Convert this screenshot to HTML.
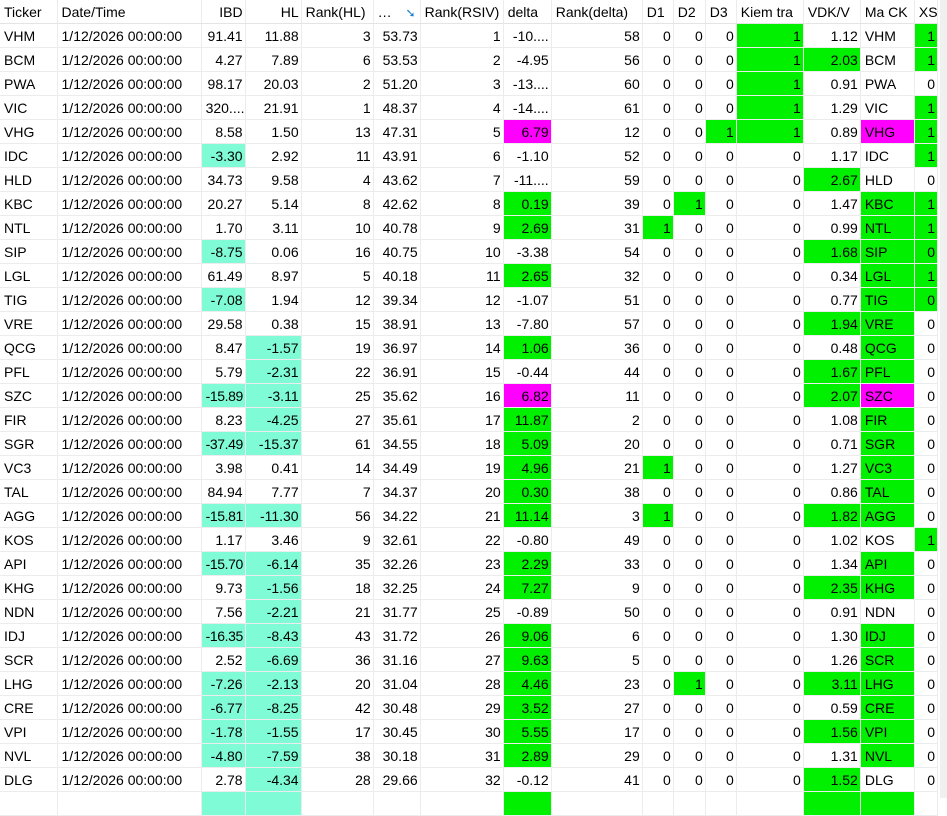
<!DOCTYPE html>
<html><head><meta charset="utf-8"><style>
html,body{margin:0;padding:0;background:#fff;width:947px;height:798px;overflow:hidden}
table{border-collapse:collapse;table-layout:fixed;width:938px;font-family:"Liberation Sans",sans-serif;font-size:14px;color:#000;position:absolute;left:0;top:0}
td,th{height:23px;padding:0 2px 0 4px;border-right:1px solid #ececec;border-bottom:1px solid #ececec;white-space:nowrap;overflow:hidden;text-align:right;font-weight:normal}
th{text-align:left;border-bottom:1px solid #e4e4e4}
th.r{text-align:right}
td.l{text-align:left}
.s{letter-spacing:-0.4px}
.g{background:#00f000}.c{background:#7ffcd6}.m{background:#ff00ff}
#sb{position:absolute;left:940px;top:0;width:7px;height:798px;background:#f0f0f0}
</style></head><body>
<table>
<colgroup><col style="width:57px"><col style="width:144px"><col style="width:44px"><col style="width:56px"><col style="width:72px"><col style="width:47px"><col style="width:83px"><col style="width:48px"><col style="width:91px"><col style="width:31px"><col style="width:32px"><col style="width:31px"><col style="width:67px"><col style="width:57px"><col style="width:54px"><col style="width:23px"></colgroup>
<tr><th>Ticker</th><th>Date/Time</th><th class="r">IBD</th><th class="r">HL</th><th>Rank(HL)</th><th>… <span style="color:#1a7fd0;font-size:12px;margin-left:10px">➘</span></th><th>Rank(RSIV)</th><th>delta</th><th>Rank(delta)</th><th>D1</th><th>D2</th><th>D3</th><th>Kiem tra</th><th>VDK/V</th><th>Ma CK</th><th>XS</th></tr>
<tr><td class="l">VHM</td><td class="l">1/12/2026 00:00:00</td><td>91.41</td><td>11.88</td><td>3</td><td>53.73</td><td>1</td><td>-10....</td><td>58</td><td>0</td><td>0</td><td>0</td><td class="g">1</td><td>1.12</td><td class="l">VHM</td><td class="g">1</td></tr>
<tr><td class="l">BCM</td><td class="l">1/12/2026 00:00:00</td><td>4.27</td><td>7.89</td><td>6</td><td>53.53</td><td>2</td><td>-4.95</td><td>56</td><td>0</td><td>0</td><td>0</td><td class="g">1</td><td class="g">2.03</td><td class="l">BCM</td><td class="g">1</td></tr>
<tr><td class="l">PWA</td><td class="l">1/12/2026 00:00:00</td><td>98.17</td><td>20.03</td><td>2</td><td>51.20</td><td>3</td><td>-13....</td><td>60</td><td>0</td><td>0</td><td>0</td><td class="g">1</td><td>0.91</td><td class="l">PWA</td><td>0</td></tr>
<tr><td class="l">VIC</td><td class="l">1/12/2026 00:00:00</td><td>320....</td><td>21.91</td><td>1</td><td>48.37</td><td>4</td><td>-14....</td><td>61</td><td>0</td><td>0</td><td>0</td><td class="g">1</td><td>1.29</td><td class="l">VIC</td><td class="g">1</td></tr>
<tr><td class="l">VHG</td><td class="l">1/12/2026 00:00:00</td><td>8.58</td><td>1.50</td><td>13</td><td>47.31</td><td>5</td><td class="m">6.79</td><td>12</td><td>0</td><td>0</td><td class="g">1</td><td class="g">1</td><td>0.89</td><td class="l m">VHG</td><td class="g">1</td></tr>
<tr><td class="l">IDC</td><td class="l">1/12/2026 00:00:00</td><td class="c">-3.30</td><td>2.92</td><td>11</td><td>43.91</td><td>6</td><td>-1.10</td><td>52</td><td>0</td><td>0</td><td>0</td><td>0</td><td>1.17</td><td class="l">IDC</td><td class="g">1</td></tr>
<tr><td class="l">HLD</td><td class="l">1/12/2026 00:00:00</td><td>34.73</td><td>9.58</td><td>4</td><td>43.62</td><td>7</td><td>-11....</td><td>59</td><td>0</td><td>0</td><td>0</td><td>0</td><td class="g">2.67</td><td class="l">HLD</td><td>0</td></tr>
<tr><td class="l">KBC</td><td class="l">1/12/2026 00:00:00</td><td>20.27</td><td>5.14</td><td>8</td><td>42.62</td><td>8</td><td class="g">0.19</td><td>39</td><td>0</td><td class="g">1</td><td>0</td><td>0</td><td>1.47</td><td class="l g">KBC</td><td class="g">1</td></tr>
<tr><td class="l">NTL</td><td class="l">1/12/2026 00:00:00</td><td>1.70</td><td>3.11</td><td>10</td><td>40.78</td><td>9</td><td class="g">2.69</td><td>31</td><td class="g">1</td><td>0</td><td>0</td><td>0</td><td>0.99</td><td class="l g">NTL</td><td class="g">1</td></tr>
<tr><td class="l">SIP</td><td class="l">1/12/2026 00:00:00</td><td class="c">-8.75</td><td>0.06</td><td>16</td><td>40.75</td><td>10</td><td>-3.38</td><td>54</td><td>0</td><td>0</td><td>0</td><td>0</td><td class="g">1.68</td><td class="l g">SIP</td><td class="g">0</td></tr>
<tr><td class="l">LGL</td><td class="l">1/12/2026 00:00:00</td><td>61.49</td><td>8.97</td><td>5</td><td>40.18</td><td>11</td><td class="g">2.65</td><td>32</td><td>0</td><td>0</td><td>0</td><td>0</td><td>0.34</td><td class="l g">LGL</td><td class="g">1</td></tr>
<tr><td class="l">TIG</td><td class="l">1/12/2026 00:00:00</td><td class="c">-7.08</td><td>1.94</td><td>12</td><td>39.34</td><td>12</td><td>-1.07</td><td>51</td><td>0</td><td>0</td><td>0</td><td>0</td><td>0.77</td><td class="l g">TIG</td><td class="g">0</td></tr>
<tr><td class="l">VRE</td><td class="l">1/12/2026 00:00:00</td><td>29.58</td><td>0.38</td><td>15</td><td>38.91</td><td>13</td><td>-7.80</td><td>57</td><td>0</td><td>0</td><td>0</td><td>0</td><td class="g">1.94</td><td class="l g">VRE</td><td>0</td></tr>
<tr><td class="l">QCG</td><td class="l">1/12/2026 00:00:00</td><td>8.47</td><td class="c">-1.57</td><td>19</td><td>36.97</td><td>14</td><td class="g">1.06</td><td>36</td><td>0</td><td>0</td><td>0</td><td>0</td><td>0.48</td><td class="l g">QCG</td><td>0</td></tr>
<tr><td class="l">PFL</td><td class="l">1/12/2026 00:00:00</td><td>5.79</td><td class="c">-2.31</td><td>22</td><td>36.91</td><td>15</td><td>-0.44</td><td>44</td><td>0</td><td>0</td><td>0</td><td>0</td><td class="g">1.67</td><td class="l g">PFL</td><td>0</td></tr>
<tr><td class="l">SZC</td><td class="l">1/12/2026 00:00:00</td><td class="c s">-15.89</td><td class="c">-3.11</td><td>25</td><td>35.62</td><td>16</td><td class="m">6.82</td><td>11</td><td>0</td><td>0</td><td>0</td><td>0</td><td class="g">2.07</td><td class="l m">SZC</td><td>0</td></tr>
<tr><td class="l">FIR</td><td class="l">1/12/2026 00:00:00</td><td>8.23</td><td class="c">-4.25</td><td>27</td><td>35.61</td><td>17</td><td class="g">11.87</td><td>2</td><td>0</td><td>0</td><td>0</td><td>0</td><td>1.08</td><td class="l g">FIR</td><td>0</td></tr>
<tr><td class="l">SGR</td><td class="l">1/12/2026 00:00:00</td><td class="c s">-37.49</td><td class="c">-15.37</td><td>61</td><td>34.55</td><td>18</td><td class="g">5.09</td><td>20</td><td>0</td><td>0</td><td>0</td><td>0</td><td>0.71</td><td class="l g">SGR</td><td>0</td></tr>
<tr><td class="l">VC3</td><td class="l">1/12/2026 00:00:00</td><td>3.98</td><td>0.41</td><td>14</td><td>34.49</td><td>19</td><td class="g">4.96</td><td>21</td><td class="g">1</td><td>0</td><td>0</td><td>0</td><td>1.27</td><td class="l g">VC3</td><td>0</td></tr>
<tr><td class="l">TAL</td><td class="l">1/12/2026 00:00:00</td><td>84.94</td><td>7.77</td><td>7</td><td>34.37</td><td>20</td><td class="g">0.30</td><td>38</td><td>0</td><td>0</td><td>0</td><td>0</td><td>0.86</td><td class="l g">TAL</td><td>0</td></tr>
<tr><td class="l">AGG</td><td class="l">1/12/2026 00:00:00</td><td class="c s">-15.81</td><td class="c">-11.30</td><td>56</td><td>34.22</td><td>21</td><td class="g">11.14</td><td>3</td><td class="g">1</td><td>0</td><td>0</td><td>0</td><td class="g">1.82</td><td class="l g">AGG</td><td>0</td></tr>
<tr><td class="l">KOS</td><td class="l">1/12/2026 00:00:00</td><td>1.17</td><td>3.46</td><td>9</td><td>32.61</td><td>22</td><td>-0.80</td><td>49</td><td>0</td><td>0</td><td>0</td><td>0</td><td>1.02</td><td class="l">KOS</td><td class="g">1</td></tr>
<tr><td class="l">API</td><td class="l">1/12/2026 00:00:00</td><td class="c s">-15.70</td><td class="c">-6.14</td><td>35</td><td>32.26</td><td>23</td><td class="g">2.29</td><td>33</td><td>0</td><td>0</td><td>0</td><td>0</td><td>1.34</td><td class="l g">API</td><td>0</td></tr>
<tr><td class="l">KHG</td><td class="l">1/12/2026 00:00:00</td><td>9.73</td><td class="c">-1.56</td><td>18</td><td>32.25</td><td>24</td><td class="g">7.27</td><td>9</td><td>0</td><td>0</td><td>0</td><td>0</td><td class="g">2.35</td><td class="l g">KHG</td><td>0</td></tr>
<tr><td class="l">NDN</td><td class="l">1/12/2026 00:00:00</td><td>7.56</td><td class="c">-2.21</td><td>21</td><td>31.77</td><td>25</td><td>-0.89</td><td>50</td><td>0</td><td>0</td><td>0</td><td>0</td><td>0.91</td><td class="l">NDN</td><td>0</td></tr>
<tr><td class="l">IDJ</td><td class="l">1/12/2026 00:00:00</td><td class="c s">-16.35</td><td class="c">-8.43</td><td>43</td><td>31.72</td><td>26</td><td class="g">9.06</td><td>6</td><td>0</td><td>0</td><td>0</td><td>0</td><td>1.30</td><td class="l g">IDJ</td><td>0</td></tr>
<tr><td class="l">SCR</td><td class="l">1/12/2026 00:00:00</td><td>2.52</td><td class="c">-6.69</td><td>36</td><td>31.16</td><td>27</td><td class="g">9.63</td><td>5</td><td>0</td><td>0</td><td>0</td><td>0</td><td>1.26</td><td class="l g">SCR</td><td>0</td></tr>
<tr><td class="l">LHG</td><td class="l">1/12/2026 00:00:00</td><td class="c">-7.26</td><td class="c">-2.13</td><td>20</td><td>31.04</td><td>28</td><td class="g">4.46</td><td>23</td><td>0</td><td class="g">1</td><td>0</td><td>0</td><td class="g">3.11</td><td class="l g">LHG</td><td>0</td></tr>
<tr><td class="l">CRE</td><td class="l">1/12/2026 00:00:00</td><td class="c">-6.77</td><td class="c">-8.25</td><td>42</td><td>30.48</td><td>29</td><td class="g">3.52</td><td>27</td><td>0</td><td>0</td><td>0</td><td>0</td><td>0.59</td><td class="l g">CRE</td><td>0</td></tr>
<tr><td class="l">VPI</td><td class="l">1/12/2026 00:00:00</td><td class="c">-1.78</td><td class="c">-1.55</td><td>17</td><td>30.45</td><td>30</td><td class="g">5.55</td><td>17</td><td>0</td><td>0</td><td>0</td><td>0</td><td class="g">1.56</td><td class="l g">VPI</td><td>0</td></tr>
<tr><td class="l">NVL</td><td class="l">1/12/2026 00:00:00</td><td class="c">-4.80</td><td class="c">-7.59</td><td>38</td><td>30.18</td><td>31</td><td class="g">2.89</td><td>29</td><td>0</td><td>0</td><td>0</td><td>0</td><td>1.31</td><td class="l g">NVL</td><td>0</td></tr>
<tr><td class="l">DLG</td><td class="l">1/12/2026 00:00:00</td><td>2.78</td><td class="c">-4.34</td><td>28</td><td>29.66</td><td>32</td><td>-0.12</td><td>41</td><td>0</td><td>0</td><td>0</td><td>0</td><td class="g">1.52</td><td class="l">DLG</td><td>0</td></tr>
<tr><td></td><td></td><td class="c"></td><td class="c"></td><td></td><td></td><td></td><td class="g"></td><td></td><td></td><td></td><td></td><td></td><td class="g"></td><td class="g"></td><td></td></tr>
</table>
<div id="sb"></div>
</body></html>
